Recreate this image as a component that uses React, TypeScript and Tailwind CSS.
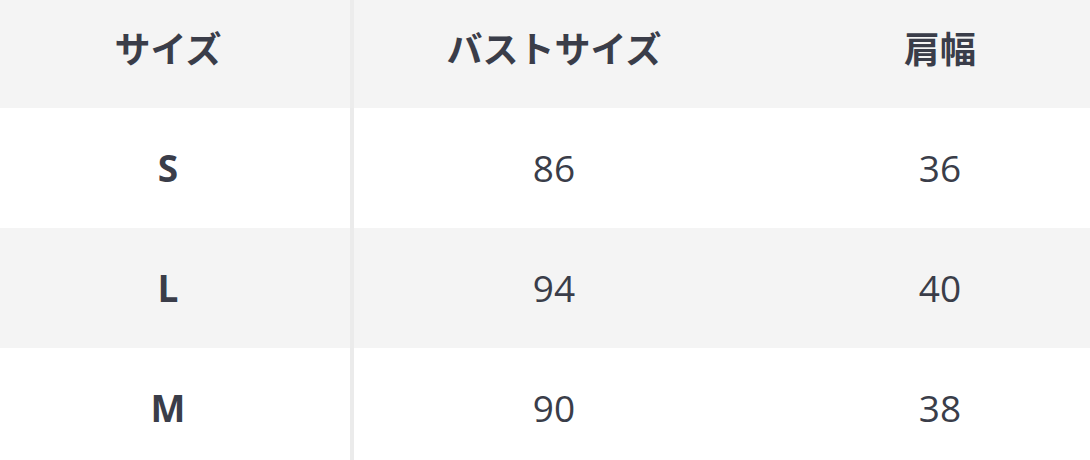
import React from "react";

const rows = [
  { size: "S", bust: "86", shoulder: "36", bg: "bg-white" },
  { size: "L", bust: "94", shoulder: "40", bg: "bg-[#f4f4f4]" },
  { size: "M", bust: "90", shoulder: "38", bg: "bg-white" },
];

export default function App() {
  return (
    <div
      className="w-[1090px] h-[460px] overflow-hidden bg-white text-[#3a3d49]"
      style={{ fontFamily: '"Open Sans", "Noto Sans CJK JP", sans-serif' }}
    >
      <div className="w-[1126px]">
        <div className="flex h-[108px] bg-[#f4f4f4]">
          <div className="w-[354px] pr-[14px] pb-[14px] border-r-4 border-[#ececec] flex items-center justify-center text-[36px] font-bold" style={{ fontFamily: '"Noto Sans CJK JP", sans-serif' }}>
            サイズ
          </div>
          <div className="w-[400px] pb-[14px] flex items-center justify-center text-[36px] font-bold" style={{ fontFamily: '"Noto Sans CJK JP", sans-serif' }}>
            バストサイズ
          </div>
          <div className="w-[372px] pb-[14px] flex items-center justify-center text-[36px] font-bold" style={{ fontFamily: '"Noto Sans CJK JP", sans-serif' }}>
            肩幅
          </div>
        </div>
        {rows.map((r) => (
          <div key={r.size} className={`flex h-[120px] ${r.bg}`}>
            <div className="w-[354px] pr-[14px] border-r-4 border-[#ebebeb] flex items-center justify-center text-[37px] font-bold">
              {r.size}
            </div>
            <div className="w-[400px] flex items-center justify-center text-[37px]">
              {r.bust}
            </div>
            <div className="w-[372px] flex items-center justify-center text-[37px]">
              {r.shoulder}
            </div>
          </div>
        ))}
      </div>
    </div>
  );
}
